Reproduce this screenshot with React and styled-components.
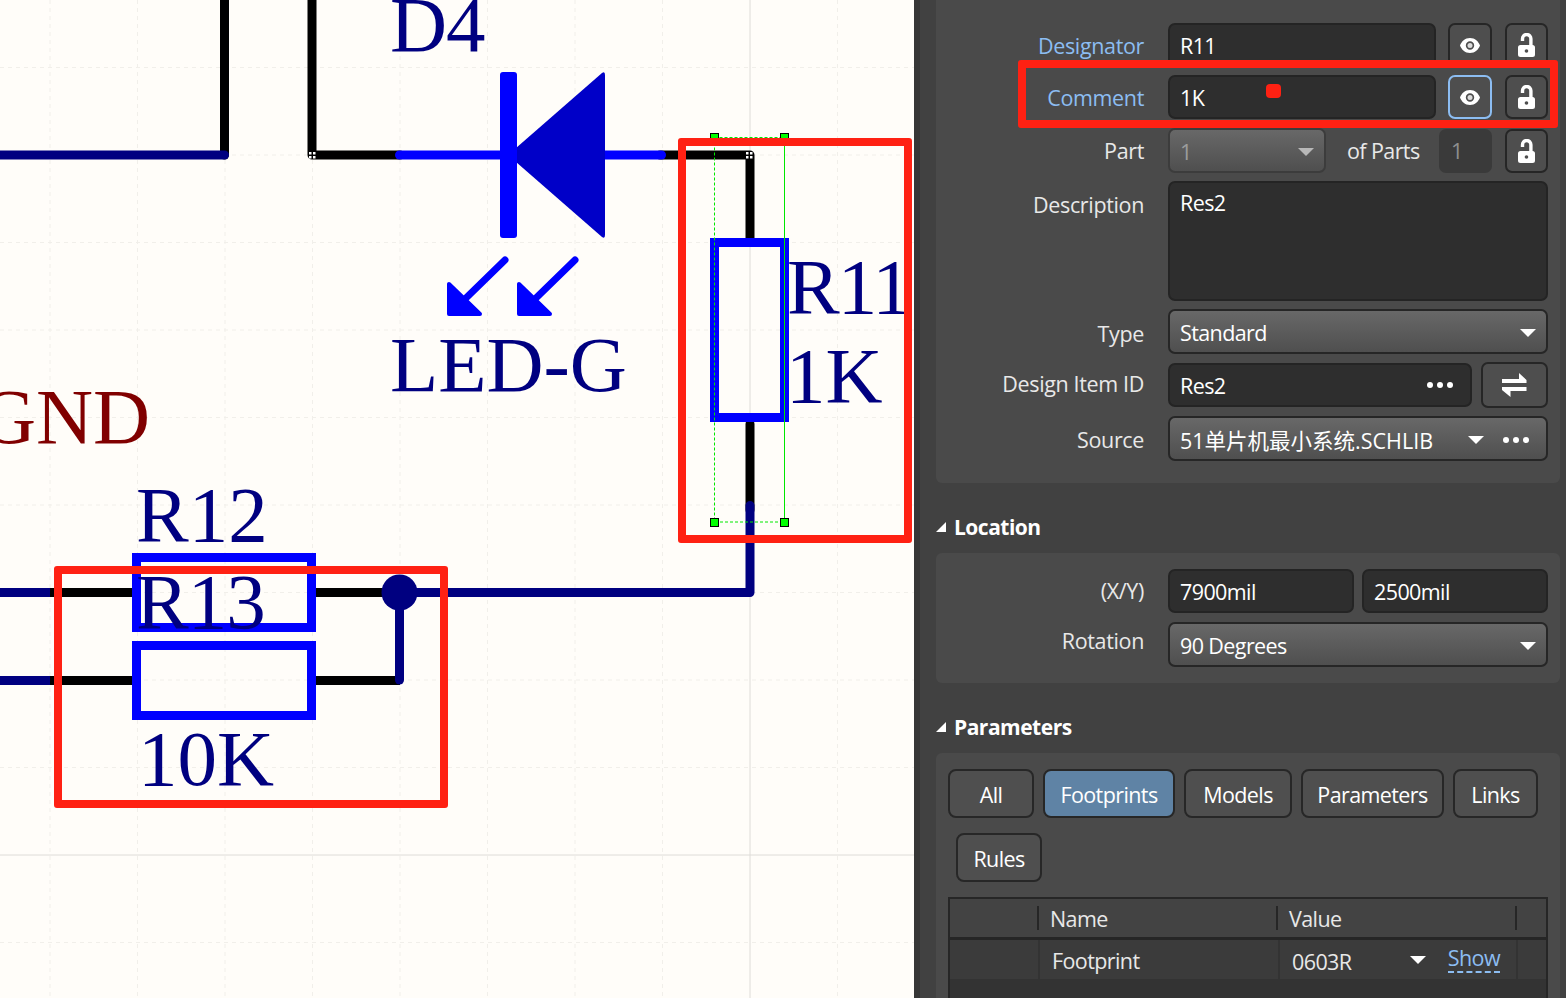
import React from "react";
import styled, { createGlobalStyle } from "styled-components";

const Global = createGlobalStyle`
  html, body { margin: 0; padding: 0; width: 1566px; height: 998px; overflow: hidden; background: #fffdf9; }
  * { box-sizing: border-box; }
`;

const Page = styled.div`
  position: relative;
  display: flex;
  width: 1566px;
  height: 998px;
  overflow: hidden;
  font-family: "Open Sans", "Noto Sans CJK SC", sans-serif;
  font-size: 21.5px;
  letter-spacing: -0.6px;
  color: #e8e8e8;
`;

const Canvas = styled.svg`
  display: block;
  flex: 0 0 914px;
  width: 914px;
  height: 998px;
  background: #fffdf9;
`;

const Sheet = styled.text`
  font-family: "Liberation Serif", serif;
  font-size: 79px;
  letter-spacing: ${(p) => p.$ls || 0}px;
  fill: ${(p) => p.$fill || "#000080"};
`;

const Panel = styled.aside`
  flex: 1;
  height: 998px;
  overflow: hidden;
  background: #414141;
  border-left: 6px solid #363636;
  padding: 0 6px 0 16px;
`;

const Card = styled.section`
  background: #4a4a4a;
  border-radius: ${(p) => (p.$top ? "0 0 6px 6px" : "6px")};
  padding: ${(p) => p.$pad || "16px 12px 16px 0"};
  display: flex;
  flex-direction: column;
  gap: ${(p) => p.$gap ?? 9}px;
`;

const SectionHead = styled.h3`
  margin: 0;
  height: 70px;
  padding-top: 18px;
  display: flex;
  align-items: center;
  gap: 8px;
  font-size: 21px;
  line-height: 30px;
  font-weight: 700;
  letter-spacing: -0.5px;
  color: #fff;
`;

const Tri = styled.svg`
  flex: none;
  width: 10px;
  height: 10px;
`;

const Row = styled.div`
  display: grid;
  grid-template-columns: 208px 380px;
  column-gap: 24px;
  margin-top: ${(p) => p.$mt || 0}px;
  align-items: ${(p) => (p.$top ? "start" : "center")};
`;

const Label = styled.label`
  text-align: right;
  line-height: 28px;
  letter-spacing: -0.35px;
  margin-top: ${(p) => p.$dy || 0}px;
  color: ${(p) => (p.$link ? "#8cbdf2" : "#e8e8e8")};
`;

const Controls = styled.div`
  display: flex;
  align-items: center;
  gap: ${(p) => p.$gap ?? 12}px;
`;

const Input = styled.div`
  flex: ${(p) => (p.$w ? `0 0 ${p.$w}px` : 1)};
  height: ${(p) => p.$h || 44}px;
  display: flex;
  align-items: ${(p) => (p.$multi ? "flex-start" : "center")};
  justify-content: space-between;
  padding: ${(p) => (p.$multi ? "5px 10px" : "0 17px 0 10px")};
  background: #2e2e2e;
  border: 2px solid #242424;
  border-radius: 7px;
  color: #fff;
  white-space: nowrap;
`;

const Select = styled.div`
  flex: ${(p) => (p.$w ? `0 0 ${p.$w}px` : 1)};
  height: 45px;
  display: flex;
  align-items: center;
  justify-content: space-between;
  padding: 2px 10px 0;
  background: linear-gradient(#686868, #4f4f4f);
  border: 2px solid #262626;
  border-radius: 7px;
  color: ${(p) => (p.$off ? "#9c9c9c" : "#fff")};
  border-color: ${(p) => (p.$off ? "#3c3c3c" : "#262626")};
  white-space: nowrap;
`;

const SourceName = styled.span`
  letter-spacing: 0;
`;

const Trailing = styled.span`
  display: flex;
  align-items: center;
  gap: 19px;
  margin-right: 7px;
`;

const Arrow = styled.svg`
  flex: none;
  width: 16px;
  height: 8px;
  fill: ${(p) => (p.$off ? "#b8b8b8" : "#fff")};
`;

const Dots = styled.svg`
  flex: none;
  width: 26px;
  height: 6px;
  fill: #fff;
`;

const IconButton = styled.button`
  flex: 0 0 ${(p) => p.$w || 44}px;
  height: ${(p) => p.$h || 44}px;
  margin-left: ${(p) => p.$ml || 0}px;
  padding: 0;
  display: flex;
  align-items: center;
  justify-content: center;
  background: #4e4e4e;
  border: 2px solid ${(p) => (p.$on ? "#8cbdf2" : "#262626")};
  border-radius: 7px;
`;

const Off = styled.div`
  flex: 0 0 53px;
  height: 44px;
  margin-right: 13px;
  display: flex;
  align-items: center;
  padding-left: 12px;
  background: #3a3a3a;
  border-radius: 7px;
  color: #8e8e8e;
`;

const OfParts = styled.span`
  flex: 0 0 72px;
  min-width: 0;
  margin: 0 20px 0 21px;
  white-space: nowrap;
`;

const Tabs = styled.div`
  display: flex;
  flex-wrap: wrap;
  gap: 15px 9px;
  padding: 0 10px 0 12px;
`;

const Tab = styled.button`
  width: ${(p) => p.$w}px;
  height: 49px;
  margin-left: ${(p) => p.$ml || 0}px;
  padding: 1px 0 0;
  font: inherit;
  letter-spacing: inherit;
  color: #fff;
  background: ${(p) => (p.$on ? "#5f83a5" : "#4f4f4f")};
  border: 2px solid #272727;
  border-radius: 8px;
`;

const TableBox = styled.div`
  margin: 6px 0 0 12px;
  width: 600px;
  height: 130px;
  border: 2px solid #262626;
  border-bottom: 0;
  background: #333;
  display: flex;
  flex-direction: column;
`;

const TableHead = styled.div`
  flex: 0 0 41px;
  display: grid;
  grid-template-columns: 89px 239px 239px 1fr;
  align-items: center;
  background: #434343;
  border-bottom: 3px solid #262626;
`;

const HeadCell = styled.div`
  height: 24px;
  line-height: 26px;
  padding-left: 11px;
  border-right: ${(p) => (p.$last ? "none" : "2px solid #262626")};
`;

const TableRow = styled.div`
  flex: 0 0 39px;
  display: grid;
  grid-template-columns: 90px 240px 238px 1fr;
  background: #3b3b3b;
`;

const BodyCell = styled.div`
  display: flex;
  align-items: center;
  padding: 1px ${(p) => p.$pr || 0}px 0 ${(p) => p.$pl ?? 12}px;
  border-right: ${(p) => (p.$last ? "none" : "2px solid #333")};
`;

const CellValue = styled.span`
  flex: 1;
  padding-top: 3px;
`;

const ShowLink = styled.span`
  margin-left: 22px;
  color: #8cbdf2;
  line-height: 26px;
  margin-top: -2px;
  border-bottom: 2px dashed #8cbdf2;
`;

const Mark = styled.div`
  position: absolute;
  left: ${(p) => p.$x}px;
  top: ${(p) => p.$y}px;
  width: ${(p) => p.$w}px;
  height: ${(p) => p.$h}px;
  border: 8px solid #ff2113;
  border-radius: 3px;
  pointer-events: none;
`;

const Dot = styled.div`
  position: absolute;
  left: 1266px;
  top: 84px;
  width: 15px;
  height: 14px;
  background: #ff2113;
  border-radius: 4px;
`;

const WHITE = "#fff";

const EyeIcon = () => (
  <svg width="20" height="15" viewBox="0 0 20 15">
    <path fillRule="evenodd" fill={WHITE} d="M10 0C15 0 18.500 3.500 20 7.500 18.500 11.500 15 15 10 15S1.500 11.500 0 7.500C1.500 3.500 5 0 10 0ZM10 3.300A4.200 4.200 0 1 0 10 11.700 4.200 4.200 0 1 0 10 3.300Z" />
    <circle cx="10" cy="7.500" r="2.500" fill="#dcdcdc" />
  </svg>
);

const LockIcon = () => (
  <svg width="17" height="24" viewBox="0 0 17 24">
    <path fill="none" stroke={WHITE} strokeWidth="3.400" d="M4.500 8V5.700a4.200 4.200 0 0 1 8.400 0V13" />
    <path fillRule="evenodd" fill={WHITE} d="M2.500 12H14.500A2.500 2.500 0 0 1 17 14.500V21.500A2.500 2.500 0 0 1 14.500 24H2.500A2.500 2.500 0 0 1 0 21.500V14.500A2.500 2.500 0 0 1 2.500 12ZM8.500 16.200A1.800 1.800 0 1 0 8.500 19.800 1.800 1.800 0 1 0 8.500 16.200Z" />
  </svg>
);

const SwapIcon = () => (
  <svg width="25" height="24" viewBox="0 0 25 24">
    <path fill={WHITE} d="M0 6H17V0L24.500 7V10H0ZM0 14H24.500V18H8.500V24L0 17Z" />
  </svg>
);

const DownArrow = ({ off }) => (
  <Arrow $off={off} viewBox="0 0 16 8"><path d="M0 0H16L8 8Z" /></Arrow>
);

const ThreeDots = () => (
  <Dots viewBox="0 0 26 6">
    <circle cx="3" cy="3" r="3" /><circle cx="13" cy="3" r="3" /><circle cx="23" cy="3" r="3" />
  </Dots>
);

const HeadTri = () => (
  <Tri viewBox="0 0 10 10"><path fill={WHITE} d="M10 0V10H0Z" /></Tri>
);

const GRID_X = Array.from({ length: 11 }, (_, i) => 50 + i * 87.5);
const GRID_Y = Array.from({ length: 12 }, (_, i) => -20 + i * 87.5);

const Handle = ({ x, y }) => (
  <rect x={x - 4} y={y - 4} width="8" height="8" fill="#00ff00" stroke="#000" strokeWidth="1" />
);

const Snap = ({ x, y }) => (
  <g fill="#fff">
    <rect x={x - 3} y={y - 3} width="2.500" height="2.500" />
    <rect x={x + 1} y={y - 3} width="2.500" height="2.500" />
    <rect x={x - 3} y={y + 1} width="2.500" height="2.500" />
    <rect x={x + 1} y={y + 1} width="2.500" height="2.500" />
  </g>
);

const LedArrow = ({ dx }) => (
  <g transform={`translate(${dx} 0)`}>
    <path d="M505 260L466 298" stroke="#0000ff" strokeWidth="7" strokeLinecap="round" />
    <path d="M449 284V314H480Z" fill="#0000ff" stroke="#0000ff" strokeWidth="4" strokeLinejoin="round" />
  </g>
);

const Schematic = () => (
  <Canvas viewBox="0 0 914 998">
    {GRID_X.map((x) => (
      <line key={x} x1={x} y1="0" x2={x} y2="998" stroke={x === 750 ? "#dedcd8" : "#f1efea"} strokeDasharray={x === 750 ? "none" : "4 4"} />
    ))}
    {GRID_Y.map((y) => (
      <line key={y} x1="0" y1={y} x2="914" y2={y} stroke={y === 855 ? "#dedcd8" : "#f1efea"} strokeDasharray={y === 855 ? "none" : "4 4"} />
    ))}

    <g fill="none" strokeWidth="9" strokeLinecap="round" strokeLinejoin="round">
      <path d="M224.500 -10V155" stroke="#000" />
      <path d="M-10 155H224.500" stroke="#000080" />
      <path d="M312 -10V155H400" stroke="#000" />
      <path d="M660 155H750V238" stroke="#000" />
      <path d="M399.500 155H661.500" stroke="#0000ff" />
      <path d="M750 424V510" stroke="#000" />
      <path d="M-10 592.500H50" stroke="#000080" />
      <path d="M50 592.500H132M316 592.500H400" stroke="#000" strokeLinecap="butt" />
      <path d="M400 592.500H750V505.500" stroke="#000080" />
      <path d="M-10 680.500H50" stroke="#000080" />
      <path d="M50 680.500H132M316 680.500H400" stroke="#000" strokeLinecap="butt" />
      <path d="M399.500 592.500V680" stroke="#000080" />
    </g>
    <circle cx="399.500" cy="592.500" r="18" fill="#000080" />
    <Snap x={312} y={155} />
    <Snap x={749} y={155} />

    <path d="M508 155L602 73Q605 71 605 75V235Q605 239 602 237Z" fill="#0000c8" />
    <rect x="500" y="72" width="17" height="166" rx="3" fill="#0000ff" />
    <LedArrow dx={0} />
    <LedArrow dx={70} />

    <g fill="none" stroke="#0000ff" strokeWidth="9">
      <rect x="714.500" y="242.500" width="70" height="175" />
      <rect x="136.500" y="557.500" width="175" height="70" />
      <rect x="136.500" y="645.500" width="175" height="70" />
    </g>

    <g fill="none" stroke="#00e800" strokeWidth="1">
      <path d="M714.500 137.500V522H784.500M714.500 137.500H784.500" strokeDasharray="3 2" />
      <path d="M784.500 137.500V522" />
    </g>
    <Handle x={714.500} y={137.500} />
    <Handle x={784.500} y={137.500} />
    <Handle x={714.500} y={522.500} />
    <Handle x={784.500} y={522.500} />

    <Sheet x="390" y="51" $ls={-1}>D4</Sheet>
    <Sheet x="390" y="391">LED-G</Sheet>
    <Sheet x="-21" y="443" $fill="#800000">GND</Sheet>
    <Sheet x="787" y="313" $ls={-2}>R11</Sheet>
    <Sheet x="786" y="402">1K</Sheet>
    <Sheet x="136" y="541">R12</Sheet>
    <Sheet x="136" y="628" $ls={-1}>R13</Sheet>
    <Sheet x="138" y="785">10K</Sheet>
  </Canvas>
);

export default function App() {
  return (
    <Page>
      <Global />
      <Schematic />
      <Panel>
        <Card $top $gap={8} $pad="23px 12px 22px 0">
          <Row>
            <Label $link $dy={2}>Designator</Label>
            <Controls>
              <Input $w={268}>R11</Input>
              <IconButton><EyeIcon /></IconButton>
              <IconButton $w={43} $ml={1}><LockIcon /></IconButton>
            </Controls>
          </Row>
          <Row>
            <Label $link $dy={2}>Comment</Label>
            <Controls>
              <Input $w={268}>1K</Input>
              <IconButton $on><EyeIcon /></IconButton>
              <IconButton $w={43} $ml={1}><LockIcon /></IconButton>
            </Controls>
          </Row>
          <Row $mt={1}>
            <Label $dy={1}>Part</Label>
            <Controls $gap={0}>
              <Select $w={158} $off>1<DownArrow off /></Select>
              <OfParts>of Parts</OfParts>
              <Off>1</Off>
              <IconButton $w={43}><LockIcon /></IconButton>
            </Controls>
          </Row>
          <Row $top>
            <Label $dy={10}>Description</Label>
            <Controls>
              <Input $multi $h={120}>Res2</Input>
            </Controls>
          </Row>
          <Row>
            <Label $dy={4}>Type</Label>
            <Controls>
              <Select>Standard<DownArrow /></Select>
            </Controls>
          </Row>
          <Row>
            <Label $dy={-2}>Design Item ID</Label>
            <Controls $gap={9}>
              <Input>Res2<ThreeDots /></Input>
              <IconButton $w={67} $h={46}><SwapIcon /></IconButton>
            </Controls>
          </Row>
          <Row>
            <Label $dy={3}>Source</Label>
            <Controls>
              <Select>
                <SourceName>51单片机最小系统.SCHLIB</SourceName>
                <Trailing><DownArrow /><ThreeDots /></Trailing>
              </Select>
            </Controls>
          </Row>
        </Card>

        <SectionHead><HeadTri />Location</SectionHead>
        <Card>
          <Row>
            <Label>(X/Y)</Label>
            <Controls $gap={8}>
              <Input>7900mil</Input>
              <Input>2500mil</Input>
            </Controls>
          </Row>
          <Row>
            <Label $dy={-7}>Rotation</Label>
            <Controls>
              <Select>90 Degrees<DownArrow /></Select>
            </Controls>
          </Row>
        </Card>

        <SectionHead><HeadTri />Parameters</SectionHead>
        <Card $pad="16px 0 0 0">
          <Tabs>
            <Tab $w={86}>All</Tab>
            <Tab $w={132} $on>Footprints</Tab>
            <Tab $w={108}>Models</Tab>
            <Tab $w={143}>Parameters</Tab>
            <Tab $w={85}>Links</Tab>
            <Tab $w={86} $ml={8}>Rules</Tab>
          </Tabs>
          <TableBox>
            <TableHead>
              <HeadCell />
              <HeadCell>Name</HeadCell>
              <HeadCell>Value</HeadCell>
              <HeadCell $last />
            </TableHead>
            <TableRow>
              <BodyCell />
              <BodyCell>Footprint</BodyCell>
              <BodyCell $pr={16}>
                <CellValue>0603R</CellValue>
                <DownArrow />
                <ShowLink>Show</ShowLink>
              </BodyCell>
              <BodyCell $last />
            </TableRow>
          </TableBox>
        </Card>
      </Panel>
      <Mark $x={678} $y={138} $w={234} $h={405} />
      <Mark $x={54} $y={566} $w={394} $h={242} />
      <Mark $x={1018} $y={60} $w={540} $h={68} />
      <Dot />
    </Page>
  );
}
